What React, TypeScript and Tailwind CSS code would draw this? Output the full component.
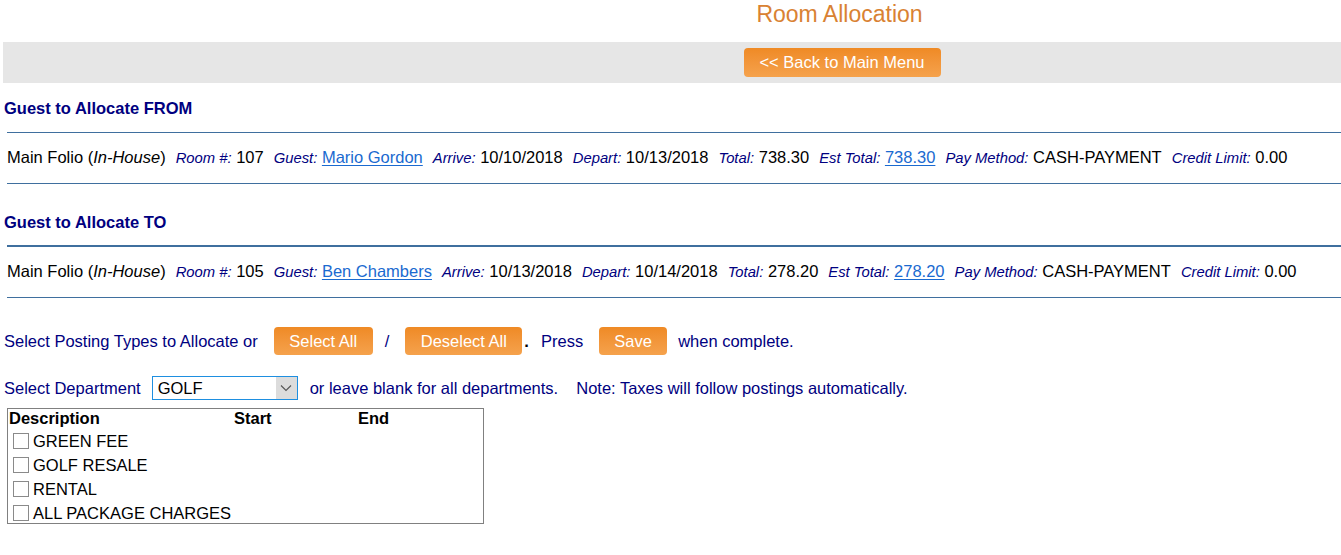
import React from "react";

const navy = "text-[#000080]";

function Pair({ label, value, link }: { label: string; value: string; link?: boolean }) {
  return (
    <span className="whitespace-nowrap">
      <span className={`italic text-[14.8px] ${navy}`}>{label}</span>{" "}
      {link ? (
        <span className="text-[#1a6ad0] underline decoration-1 underline-offset-2">{value}</span>
      ) : (
        <span className="text-black">{value}</span>
      )}
    </span>
  );
}

function GuestRow({
  room,
  guest,
  arrive,
  depart,
  total,
}: {
  room: string;
  guest: string;
  arrive: string;
  depart: string;
  total: string;
}) {
  return (
    <div className="ml-[7px] flex items-baseline gap-[10px] py-[15px] text-[16.5px] leading-[19px] text-black">
      <span className="whitespace-nowrap">
        Main Folio (<span className="italic">In-House</span>)
      </span>
      <Pair label="Room #:" value={room} />
      <Pair label="Guest:" value={guest} link />
      <Pair label="Arrive:" value={arrive} />
      <Pair label="Depart:" value={depart} />
      <Pair label="Total:" value={total} />
      <Pair label="Est Total:" value={total} link />
      <Pair label="Pay Method:" value="CASH-PAYMENT" />
      <Pair label="Credit Limit:" value="0.00" />
    </div>
  );
}

function OrangeButton({ children, className = "" }: { children: React.ReactNode; className?: string }) {
  return (
    <span
      className={`inline-flex items-center justify-center rounded-[4px] bg-gradient-to-b from-[#ef8a24] to-[#f5a24c] text-white text-[16.5px] leading-[19px] ${className}`}
    >
      {children}
    </span>
  );
}

function Check({ label }: { label: string }) {
  return (
    <div className="flex items-center h-[24px] pl-[5px]">
      <span className="w-[16px] h-[16px] border border-[#8a8a8a] bg-white shrink-0" />
      <span className="ml-[4px] text-[16.5px] leading-[19px] text-black">{label}</span>
    </div>
  );
}

export default function App() {
  return (
    <div
      className="w-[1341px] h-[555px] bg-white overflow-hidden"
      style={{ fontFamily: '"Liberation Sans", Arial, sans-serif' }}
    >
      <div className="pl-[338px] text-center text-[23px] leading-[28px] text-[#d98233]">Room Allocation</div>
      <div className="mt-[14px] ml-[3px] h-[41px] bg-[#e6e6e6] pl-[340px] pt-[6px] flex justify-center">
        <OrangeButton className="w-[197px] h-[29px]">&lt;&lt; Back to Main Menu</OrangeButton>
      </div>

      <div className={`mt-[15px] pl-[4px] font-bold text-[16.5px] leading-[20px] ${navy}`}>Guest to Allocate FROM</div>
      <div className="mt-[14px] ml-[7px] h-px bg-[#3f6f9e]" />
      <GuestRow room="107" guest="Mario Gordon" arrive="10/10/2018" depart="10/13/2018" total="738.30" />
      <div className="ml-[7px] h-px bg-[#3f6f9e]" />

      <div className={`mt-[28px] pl-[4px] font-bold text-[16.5px] leading-[20px] ${navy}`}>Guest to Allocate TO</div>
      <div className="mt-[13px] ml-[7px] h-[2px] bg-[#3f6f9e]" />
      <GuestRow room="105" guest="Ben Chambers" arrive="10/13/2018" depart="10/14/2018" total="278.20" />
      <div className="ml-[7px] h-px bg-[#3f6f9e]" />

      <div className={`mt-[29px] pl-[4px] flex items-center h-[28px] text-[16.5px] leading-[19px] ${navy}`}>
        <span>Select Posting Types to Allocate or</span>
        <OrangeButton className="ml-[16px] w-[99px] h-[28px]">Select All</OrangeButton>
        <span className="ml-[12px]">/</span>
        <OrangeButton className="ml-[16px] w-[117px] h-[28px]">Deselect All</OrangeButton>
        <span className="ml-[2px] font-bold text-black">.</span>
        <span className="ml-[12px]">Press</span>
        <OrangeButton className="ml-[16px] w-[68px] h-[28px]">Save</OrangeButton>
        <span className="ml-[11px]">when complete.</span>
      </div>

      <div className={`mt-[21px] pl-[4px] flex items-center h-[24px] text-[16.5px] leading-[19px] ${navy}`}>
        <span>Select Department</span>
        <span className="ml-[11px] flex h-[24px] w-[146px] border border-[#1e8fe0] bg-white">
          <span className="flex-1 pl-[5px] flex items-center text-black">GOLF</span>
          <span className="w-[21px] bg-[#dcdcdc] flex items-center justify-center">
            <svg width="12" height="8" viewBox="0 0 12 8">
              <path d="M1 1.5 L6 6.5 L11 1.5" fill="none" stroke="#555" strokeWidth="1.1" />
            </svg>
          </span>
        </span>
        <span className="ml-[12px]">or leave blank for all departments.</span>
        <span className="ml-[18px]">Note: Taxes will follow postings automatically.</span>
      </div>

      <div className="mt-[8px] ml-[7px] w-[477px] h-[116px] border border-[#808080]">
        <div className="flex h-[18px] items-center pl-[1px] text-[16.5px] leading-[19px] font-bold text-black">
          <span className="w-[225px]">Description</span>
          <span className="w-[124px]">Start</span>
          <span>End</span>
        </div>
        <div className="mt-[2px]">
          <Check label="GREEN FEE" />
          <Check label="GOLF RESALE" />
          <Check label="RENTAL" />
          <Check label="ALL PACKAGE CHARGES" />
        </div>
      </div>
    </div>
  );
}
